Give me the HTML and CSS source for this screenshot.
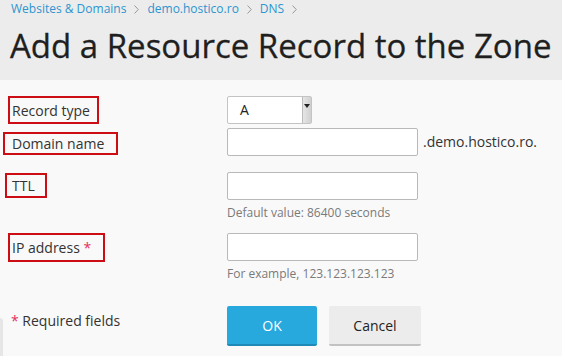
FILE: index.html
```html
<!DOCTYPE html>
<html>
<head>
<meta charset="utf-8">
<link rel="stylesheet" href="styles.css">
</head>
<body>
<header class="head">
  <nav class="crumbs">
    <a class="crumb">Websites &amp; Domains</a><svg class="sep" width="5" height="9" viewBox="0 0 5 9"><polyline points="0.5,0.5 4.3,4.5 0.5,8.5" fill="none" stroke="#9a9a9a" stroke-width="1"/></svg><a class="crumb">demo.hostico.ro</a><svg class="sep" width="5" height="9" viewBox="0 0 5 9"><polyline points="0.5,0.5 4.3,4.5 0.5,8.5" fill="none" stroke="#9a9a9a" stroke-width="1"/></svg><a class="crumb">DNS</a><svg class="sep" width="5" height="9" viewBox="0 0 5 9"><polyline points="0.5,0.5 4.3,4.5 0.5,8.5" fill="none" stroke="#9a9a9a" stroke-width="1"/></svg>
  </nav>
  <h1 class="title">Add a Resource Record to the Zone</h1>
</header>
<main class="form">
  <div class="row row-type">
    <div class="label-cell"><span class="lbl lbl-type">Record type</span></div>
    <div class="field-cell">
      <div class="select"><span class="select-val">A</span><span class="select-btn"><span class="caret"></span></span></div>
    </div>
  </div>
  <div class="row row-domain">
    <div class="label-cell"><span class="lbl lbl-domain">Domain name</span></div>
    <div class="field-cell inline">
      <div class="input"></div><span class="suffix">.demo.hostico.ro.</span>
    </div>
  </div>
  <div class="row row-ttl">
    <div class="label-cell"><span class="lbl lbl-ttl">TTL</span></div>
    <div class="field-cell">
      <div class="input"></div>
      <div class="hint">Default value: 86400 seconds</div>
    </div>
  </div>
  <div class="row row-ip">
    <div class="label-cell"><span class="lbl lbl-ip">IP address <span class="req">*</span></span></div>
    <div class="field-cell">
      <div class="input"></div>
      <div class="hint">For example, 123.123.123.123</div>
    </div>
  </div>
  <div class="row row-btns">
    <div class="label-cell"><span class="required"><span class="req">*</span> Required fields</span></div>
    <div class="field-cell buttons">
      <button class="btn btn-ok">OK</button>
      <button class="btn btn-cancel">Cancel</button>
    </div>
  </div>
  <div class="edge"></div>
</main>
</body>
</html>
```
FILE: styles.css
```css
html, body {
  margin: 0;
  padding: 0;
}
body {
  background: #f9f9f9;
  font-family: "Open Sans", "DejaVu Sans", sans-serif;
  color: #333;
  width: 562px;
  height: 356px;
  overflow: hidden;
}
.head {
  background: #ececec;
  height: 80px;
  padding: 0 0 0 11px;
  box-sizing: border-box;
}
.crumbs {
  font-size: 12px;
  line-height: 18px;
  padding-top: 0;
  white-space: nowrap;
  display: flex;
  align-items: center;
}
.crumb {
  color: #2d95cf;
}
.sep {
  margin: 0 8px;
  flex: none;
}
.title {
  margin: 6px 0 0 -1px;
  font-size: 33px;
  font-weight: 400;
  line-height: 44px;
  color: #1f1f1f;
  -webkit-text-stroke: 0.3px #1f1f1f;
  white-space: nowrap;
}
.form {
  display: flex;
  flex-direction: column;
  position: relative;
  height: 276px;
}
.edge {
  position: absolute;
  left: 0;
  top: 238px;
  width: 3px;
  height: 38px;
  background: #e6e6e6;
  border-top-right-radius: 3px;
}
.row {
  display: flex;
  align-items: flex-start;
}
.label-cell {
  width: 227px;
  flex: none;
}
.field-cell {
  display: flex;
  flex-direction: column;
}
.field-cell.inline {
  flex-direction: row;
  align-items: center;
}
.lbl {
  display: inline-block;
  border: 2px solid #cc0d14;
  font-size: 14px;
  line-height: 19px;
  color: #333;
  box-sizing: border-box;
}
.row-type { margin-top: 16px; }
.lbl-type { margin-left: 8px; width: 91px; height: 28px; padding: 3px 0 0 2px; }
.row-domain { margin-top: 4px; }
.lbl-domain { margin-left: 3px; margin-top: 4px; width: 115px; height: 23px; padding: 0 0 0 7px; }
.row-ttl { margin-top: 16px; }
.lbl-ttl { margin-left: 5px; margin-top: 1px; width: 42px; height: 25px; padding: 1px 0 0 5px; }
.row-ip { margin-top: 12px; }
.lbl-ip { margin-left: 8px; width: 97px; height: 29px; padding: 3px 0 0 2px; }
.req {
  color: #e0315a;
}
.select {
  width: 85px;
  height: 28px;
  box-sizing: border-box;
  border: 1px solid #c4c4c4;
  border-radius: 2px;
  background: #fff;
  display: flex;
  font-size: 14px;
}
.select-val {
  flex: 1;
  padding: 3px 0 0 12px;
  line-height: 19px;
  color: #222;
}
.select-btn {
  width: 9px;
  background: linear-gradient(to right, #e6e6e6, #d0d0d0);
  border-left: 1px solid #bbb;
  display: flex;
  justify-content: center;
  padding-top: 7px;
  box-sizing: border-box;
}
.caret {
  width: 0;
  height: 0;
  border-left: 3px solid transparent;
  border-right: 3px solid transparent;
  border-top: 4px solid #222;
}
.input {
  width: 191px;
  height: 28px;
  box-sizing: border-box;
  border: 1px solid #b9b9b9;
  border-radius: 2px;
  background: #fff;
}
.suffix {
  margin-left: 5px;
  font-size: 14px;
  color: #333;
  line-height: 18px;
}
.hint {
  font-size: 12px;
  color: #7a7a7a;
  line-height: 16px;
  margin-top: 5px;
}
.row-btns {
  margin-top: 24px;
  align-items: center;
}
.row-btns .label-cell {
  padding-left: 11px;
  box-sizing: border-box;
  margin-top: -12px;
}
.required {
  font-size: 14px;
  color: #333;
}
.buttons {
  flex-direction: row;
  gap: 12px;
}
.btn {
  font-family: "Open Sans", "DejaVu Sans", sans-serif;
  font-size: 14px;
  height: 40px;
  border: none;
  border-radius: 2px;
  box-sizing: border-box;
  padding: 0;
}
.btn-ok {
  width: 90px;
  background: #28a9dd;
  color: #fff;
  border-bottom: 2px solid #1f8ab8;
}
.btn-cancel {
  width: 92px;
  background: #ececec;
  color: #222;
  border-bottom: 2px solid #c2c2c2;
}
```
